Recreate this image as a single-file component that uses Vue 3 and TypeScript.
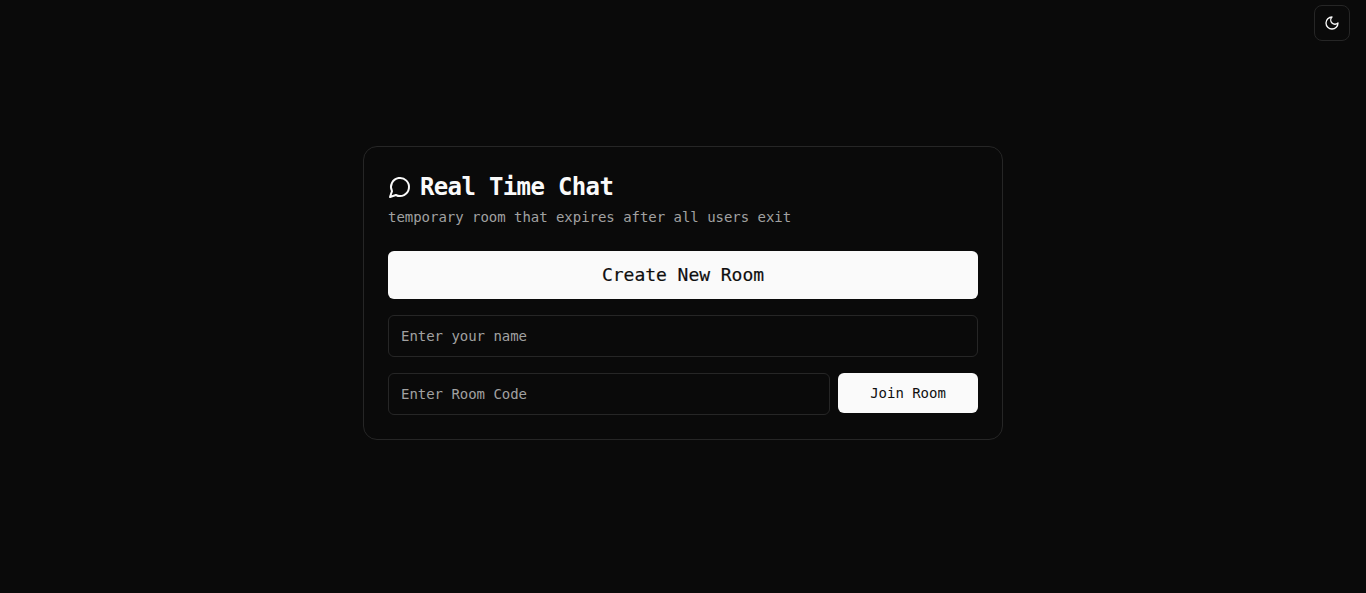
<script setup lang="ts">
const title: string = 'Real Time Chat'
</script>

<template>
  <main class="page">
    <button class="toggle" type="button" aria-label="Toggle theme">
      <svg width="16" height="16" viewBox="0 0 24 24" fill="none" stroke="currentColor" stroke-width="2" stroke-linecap="round" stroke-linejoin="round">
        <path d="M12 3a6 6 0 0 0 9 9 9 9 0 1 1-9-9Z" />
      </svg>
    </button>
    <section class="card">
      <header class="head">
        <h1 class="title">
          <svg width="24" height="24" viewBox="0 0 24 24" fill="none" stroke="currentColor" stroke-width="2" stroke-linecap="round" stroke-linejoin="round">
            <path d="M7.9 20A9 9 0 1 0 4 16.1L2 22Z" />
          </svg>
          <span>{{ title }}</span>
        </h1>
        <p class="sub">temporary room that expires after all users exit</p>
      </header>
      <div class="form">
        <button class="primary big" type="button">Create New Room</button>
        <input class="field" type="text" placeholder="Enter your name" />
        <div class="row">
          <input class="field grow" type="text" placeholder="Enter Room Code" />
          <button class="primary small" type="button">Join Room</button>
        </div>
      </div>
    </section>
  </main>
</template>

<style>
html, body { margin: 0; background: #0a0a0a; }
</style>

<style scoped>
.page {
  position: relative;
  box-sizing: border-box;
  height: 593px;
  padding-bottom: 7px;
  display: flex;
  align-items: center;
  justify-content: center;
  background: #0a0a0a;
  color: #fafafa;
  font-family: "DejaVu Sans Mono", "Liberation Mono", monospace;
}
.toggle {
  position: absolute;
  top: 5px;
  right: 16px;
  width: 36px;
  height: 36px;
  padding: 0;
  display: flex;
  align-items: center;
  justify-content: center;
  background: #0a0a0a;
  border: 1px solid #262626;
  border-radius: 8px;
  color: #fafafa;
}
.card {
  box-sizing: border-box;
  width: 640px;
  padding: 24px;
  border: 1px solid #262626;
  border-radius: 14px;
  background: #0a0a0a;
}
.head { margin-bottom: 24px; }
.title {
  margin: 0;
  display: flex;
  align-items: center;
  gap: 8px;
  font-size: 24px;
  line-height: 32px;
  font-weight: 700;
  letter-spacing: -0.65px;
}
.title svg { flex: none; }
.sub {
  margin: 4px 0 0;
  font-size: 14px;
  line-height: 20px;
  letter-spacing: -0.03px;
  color: #a1a1a1;
}
.form {
  display: flex;
  flex-direction: column;
  gap: 16px;
}
.primary {
  border: 0;
  padding: 0;
  background: #fafafa;
  color: #0f0f0f;
  font-family: inherit;
  font-weight: 500;
  border-radius: 6px;
}
.big {
  height: 48px;
  padding-bottom: 2px;
  font-size: 18px;
  letter-spacing: -0.04px;
  -webkit-text-stroke: 0.2px #0f0f0f;
}
.small {
  flex: none;
  width: 140px;
  height: 40px;
  font-size: 14px;
  letter-spacing: -0.03px;
}
.field {
  box-sizing: border-box;
  height: 42px;
  padding: 0 12px;
  width: 100%;
  background: transparent;
  border: 1px solid #262626;
  border-radius: 6px;
  color: #fafafa;
  font-family: inherit;
  font-size: 14px;
  letter-spacing: -0.03px;
  outline: none;
}
.field::placeholder { color: #a1a1a1; opacity: 1; }
.row {
  display: flex;
  align-items: flex-start;
  gap: 8px;
}
.grow { flex: 1; min-width: 0; }
</style>
